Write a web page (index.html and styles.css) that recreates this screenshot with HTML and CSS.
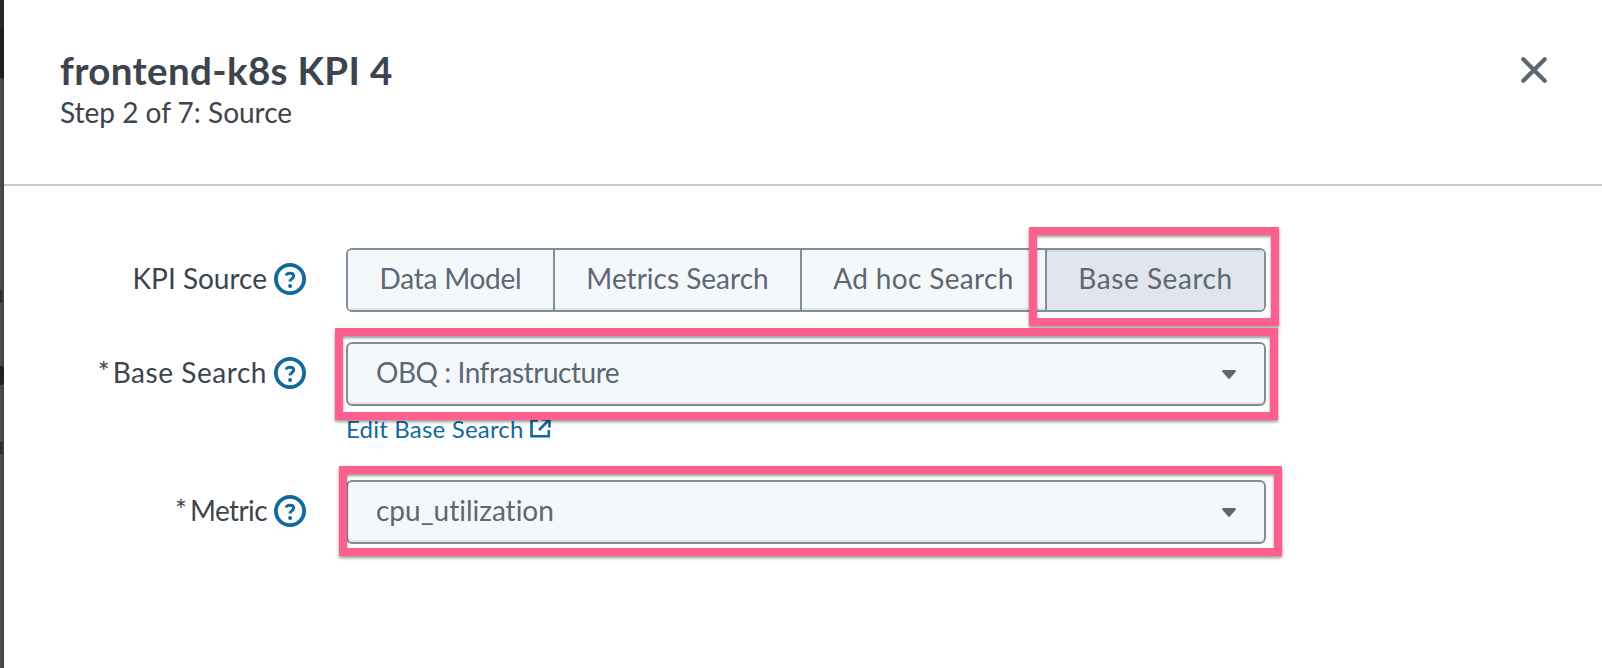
FILE: index.html
```html
<!DOCTYPE html>
<html lang="en">
<head>
<meta charset="utf-8">
<title>frontend-k8s KPI 4</title>
<link rel="stylesheet" href="styles.css">
</head>
<body>
<svg width="0" height="0" class="defs">
  <symbol id="help" viewBox="0 0 32 32">
    <circle cx="16" cy="16" r="14.1" fill="none" stroke="currentColor" stroke-width="3.8"/>
    <path d="M12.200 12.600C12.500 10.900 13.900 10.200 16 10.200c2.300 0 3.700 1.100 3.700 2.900 0 2.500-3.600 2.600-3.600 5.500" fill="none" stroke="currentColor" stroke-width="3"/>
    <circle cx="16.100" cy="22.900" r="2" fill="currentColor"/>
  </symbol>
  <symbol id="caret" viewBox="0 0 14 9">
    <path d="M1 0h12q1.500.6.5 2L8 8.300q-1 1-2 0L.5 2Q-.5.6 1 0z" fill="currentColor"/>
  </symbol>
</svg>
<div class="page">
  <div class="backdrop"><i class="top"></i><i class="bar"></i><i class="mark m1"></i><i class="mark m2"></i><i class="mark m3"></i></div>
  <main class="panel">
    <header class="head">
      <div>
        <h1 class="title">frontend-k8s KPI 4</h1>
        <p class="step">Step 2 of 7: Source</p>
      </div>
      <svg class="close" viewBox="0 0 26 26"><path d="M2.300 2.300 23.700 23.700M23.700 2.300 2.300 23.700" stroke="currentColor" stroke-width="4.200" stroke-linecap="round"/></svg>
    </header>
    <section class="form">
      <div class="row">
        <div class="label"><span class="t-kpi">KPI Source</span><svg class="help"><use href="#help"/></svg></div>
        <div class="tabs">
          <div class="tab w1"><span class="t-data">Data Model</span></div>
          <div class="tab w2"><span class="t-metrics">Metrics Search</span></div>
          <div class="tab w3"><span class="t-adhoc">Ad hoc Search</span></div>
          <div class="tab w4 active"><span class="t-base">Base Search</span></div>
        </div>
      </div>
      <div class="row">
        <div class="label"><span class="star">*</span><span class="t-base">Base Search</span><svg class="help"><use href="#help"/></svg></div>
        <div class="select"><span class="t-obq">OBQ : Infrastructure</span><svg class="caret"><use href="#caret"/></svg></div>
      </div>
      <div class="edit"><a class="link"><span class="t-edit">Edit Base Search</span><svg class="ext" viewBox="0 0 21 20"><path d="M8 2.500H1.500v15.800h17.300V12M11.500 1.500h8v8M19 2 9 12" fill="none" stroke="currentColor" stroke-width="2.600"/></svg></a></div>
      <div class="row">
        <div class="label"><span class="star">*</span><span class="t-metric">Metric</span><svg class="help"><use href="#help"/></svg></div>
        <div class="select"><span class="t-cpu">cpu_utilization</span><svg class="caret"><use href="#caret"/></svg></div>
      </div>
    </section>
  </main>
  <div class="mark-box b1"></div>
  <div class="mark-box b2"></div>
  <div class="mark-box b3"></div>
</div>
</body>
</html>
```
FILE: styles.css
```css
* { box-sizing: border-box; }
body { margin: 0; background: #fff; font-family: Lato, "Open Sans", sans-serif; font-size: 28px; font-variant-ligatures: none; color: #3c444d; }
.defs { position: absolute; }
.page { position: relative; display: flex; width: 1602px; height: 668px; overflow: hidden; }
.backdrop { position: relative; width: 4px; background: linear-gradient(90deg, #505355, #3b3e3d); }
.backdrop i { position: absolute; left: 0; width: 4px; }
.backdrop .top { top: 0; height: 30px; background: #22272b; }
.backdrop .bar { top: 30px; height: 48px; background: #1b1f26; }
.backdrop .mark { background: #2b2f34; }
.backdrop .m1 { top: 290px; height: 13px; width: 2px; }
.backdrop .m2 { top: 366px; height: 19px; background: #1b1f26; border-radius: 0 4px 4px 0; }
.backdrop .m3 { top: 442px; height: 12px; width: 3px; }
.panel { flex: 1; background: #fff; }
.head { display: flex; justify-content: space-between; align-items: flex-start; height: 186px; padding: 48px 55px 0 56px; border-bottom: 2px solid #c3cbd4; }
.title { margin: 0; font-size: 38.500px; line-height: 44px; font-weight: 700; letter-spacing: .35px; white-space: nowrap; }
.step { margin: 3px 0 0; line-height: 34px; white-space: nowrap; }
.close { width: 26px; height: 26px; margin-top: 9px; color: #5c6773; }
.form { display: flex; flex-direction: column; padding-top: 62px; }
.row { display: flex; height: 64px; gap: 40px; }
.row + .row { margin-top: 30px; }
.label { display: flex; width: 302px; height: 62px; align-items: center; justify-content: flex-end; line-height: 34px; white-space: nowrap; }
.label span { padding-bottom: 2px; }
.help { width: 32px; height: 32px; margin-left: 7px; color: #11699c; }
.star { margin-right: 3px; }
.tabs { display: flex; width: 920px; border: 2px solid #818d99; border-radius: 6px; overflow: hidden; color: #5c6773; }
.tab { display: flex; align-items: center; justify-content: center; padding-bottom: 5px; background: #f5f8fa; box-shadow: inset 0 -2px 0 #dfe5eb; white-space: nowrap; }
.tab + .tab { border-left: 2px solid #818d99; }
.w1 { width: 205px; }
.w2 { width: 247px; }
.w3 { width: 245px; }
.w4 { flex: 1; }
.tab.active { background: #e1e5ed; box-shadow: inset 0 2px 0 #d0d8e0; }
.select { display: flex; width: 920px; align-items: center; justify-content: space-between; padding: 0 28px; border: 2px solid #818d99; border-radius: 6px; background: #f5f8fa; box-shadow: inset 0 -2px 0 #dfe5eb; color: #5c6773; white-space: nowrap; }
.select span { padding-bottom: 5px; }
.t-data { letter-spacing: -.25px; }
.t-adhoc { letter-spacing: .35px; }
.t-base { letter-spacing: .55px; }
.t-metric { letter-spacing: -.6px; }
.t-obq { letter-spacing: -.46px; }
.t-edit { letter-spacing: .2px; }
.caret { width: 14px; height: 9px; }
.edit { height: 74px; padding: 8px 0 0 342px; }
.link { display: flex; align-items: center; font-size: 24px; line-height: 30px; color: #11699c; white-space: nowrap; }
.ext { width: 21px; height: 20px; margin: -2px 0 0 6px; }
.mark-box { position: absolute; border: 8.500px solid #ff5f8f; box-shadow: 0 2px 3px rgba(0,0,0,.4), inset 0 2px 3px rgba(0,0,0,.4); }
.b1 { left: 1029px; top: 227px; width: 250px; height: 99px; }
.b2 { left: 335px; top: 328px; width: 943px; height: 92px; }
.b3 { left: 339px; top: 466px; width: 943px; height: 90px; }
```
